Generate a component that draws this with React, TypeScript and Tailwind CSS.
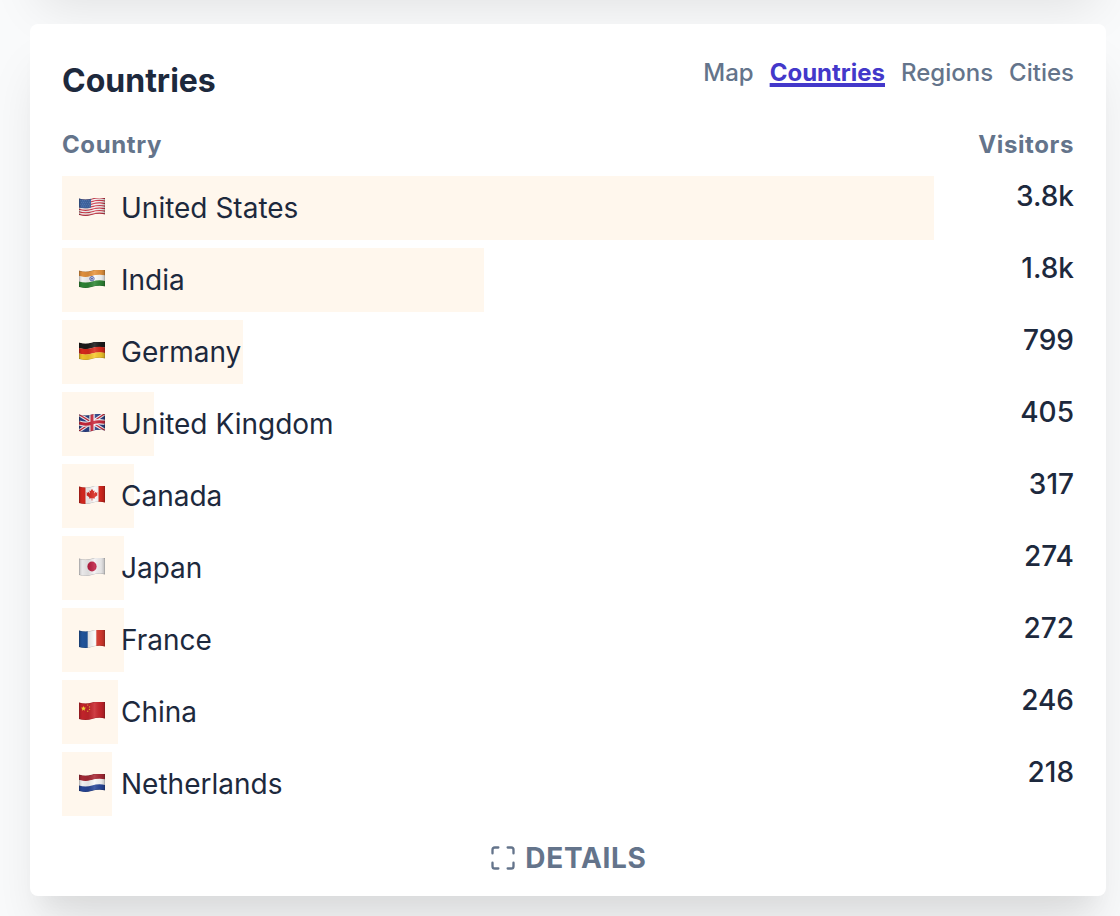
import { useId, useState } from 'react';
import type { ReactNode } from 'react';
import { Maximize } from 'lucide-react';

type Code = 'us' | 'in' | 'de' | 'gb' | 'ca' | 'jp' | 'fr' | 'cn' | 'nl';

interface Row {
  code: Code;
  name: string;
  visitors: string;
  share: number;
}

const rows: Row[] = [
  { code: 'us', name: 'United States', visitors: '3.8k', share: 100 },
  { code: 'in', name: 'India', visitors: '1.8k', share: 48.4 },
  { code: 'de', name: 'Germany', visitors: '799', share: 20.8 },
  { code: 'gb', name: 'United Kingdom', visitors: '405', share: 10.6 },
  { code: 'ca', name: 'Canada', visitors: '317', share: 8.3 },
  { code: 'jp', name: 'Japan', visitors: '274', share: 7.1 },
  { code: 'fr', name: 'France', visitors: '272', share: 7.1 },
  { code: 'cn', name: 'China', visitors: '246', share: 6.4 },
  { code: 'nl', name: 'Netherlands', visitors: '218', share: 5.7 },
];

const tabs = ['Map', 'Countries', 'Regions', 'Cities'];

// a horizontal band that follows the wave of the flag
const band = (y: number, h: number) =>
  `M0 ${y}c4 1.4 9 1.4 13 0s9-1.6 13-.6v${h}c-4-1-9-.8-13 .6s-9 1.4-13 0z`;

const stripes = (colors: string[], top = 2, height = 16.5) =>
  colors.map((color, i) => (
    <path key={i} d={band(top + (i * height) / colors.length, height / colors.length + 0.1)} fill={color} />
  ));

const art: Record<Code, ReactNode> = {
  us: (
    <>
      {stripes(Array.from({ length: 13 }, (_, i) => (i % 2 ? '#f7f5f5' : '#d0394a')))}
      <path d="M0 1h12v9.9c-4 1.2-8 1.3-12 .2z" fill="#3f68a8" />
      <path
        d="M1 4.2h10M2 6h9M1 7.8h10M2 9.6h9"
        stroke="#89a3cf"
        strokeWidth=".6"
        strokeDasharray=".6 1.4"
      />
    </>
  ),
  in: (
    <>
      {stripes(['#e8953f', '#fafafa', '#2f8736'])}
      <circle cx="13" cy="10.2" r="2.2" fill="#cfd5ee" stroke="#4656a8" strokeWidth=".9" />
      <circle cx="13" cy="10.2" r=".9" fill="#3c4d9c" />
    </>
  ),
  de: <>{stripes(['#1c1a1a', '#dc2a1c', '#f7c92b'])}</>,
  gb: (
    <>
      <path d="M0 0h26v20H0z" fill="#2c4288" />
      <path d="M0 2l26 16M0 18.5L26 1" stroke="#f4f2f5" strokeWidth="3.4" />
      <path d="M0 2l26 16M0 18.5L26 1" stroke="#c9283c" strokeWidth="1.2" />
      <path d="M13 0v20M0 10.5c4 1.4 9 1.4 13 0s9-1.6 13-.6" stroke="#f4f2f5" strokeWidth="5.4" fill="none" />
      <path d="M13 0v20M0 10.5c4 1.4 9 1.4 13 0s9-1.6 13-.6" stroke="#cc283c" strokeWidth="3" fill="none" />
    </>
  ),
  ca: (
    <>
      <path d="M0 0h26v20H0z" fill="#faf9f9" />
      <path d="M0 0h6.5v20H0zM19.500 0H26v20h-6.5z" fill="#d9281f" />
      <path
        d="M13 4.200l1.300 2.300 1.300-.6-.5 3 1.700-1.600.4 1 1.500-.2-.7 1.700.8.6-3.100 2.400.3 1.200-2.700-.3.100 2.200h-.8l.1-2.200-2.700.3.300-1.200-3.100-2.400.8-.6-.7-1.700 1.500.2.400-1 1.700 1.600-.5-3 1.300.6z"
        fill="#d9281f"
      />
    </>
  ),
  jp: (
    <>
      <path d="M0 0h26v20H0z" fill="#f3f2f3" />
      <ellipse cx="13" cy="10" rx="4.6" ry="5" fill="#bd1f43" />
    </>
  ),
  fr: (
    <>
      <path d="M0 0h9v20H0z" fill="#2257a0" />
      <path d="M8.7 0h8.7v20H8.700z" fill="#fafafa" />
      <path d="M17.3 0H26v20h-8.700z" fill="#d8392f" />
    </>
  ),
  cn: (
    <>
      <path d="M0 0h26v20H0z" fill="#c9252c" />
      <path d="M4.5 5.4l.7 1.700 1.800.1-1.400 1.200.5 1.800-1.600-1-1.600 1 .5-1.800L2 7.200l1.800-.1z" fill="#fbdc3a" />
      <g fill="#f0b335">
        <circle cx="8.7" cy="4.6" r=".7" />
        <circle cx="10.5" cy="6.4" r=".7" />
        <circle cx="10.5" cy="8.9" r=".7" />
        <circle cx="8.7" cy="10.8" r=".7" />
      </g>
    </>
  ),
  nl: <>{stripes(['#a82a36', '#fafafa', '#28479a'])}</>,
};

function Flag({ code }: { code: Code }) {
  const id = useId();

  return (
    <svg className="h-5 w-[26px] shrink-0" viewBox="0 1.5 26 20" aria-hidden="true">
      <defs>
        <clipPath id={`${id}-wave`}>
          <path d={band(2, 16.5)} />
        </clipPath>
        <linearGradient id={`${id}-shade`}>
          <stop offset="0" stopColor="#000" stopOpacity=".22" />
          <stop offset=".12" stopColor="#000" stopOpacity=".04" />
          <stop offset=".35" stopColor="#000" stopOpacity=".1" />
          <stop offset=".6" stopColor="#fff" stopOpacity=".12" />
          <stop offset=".85" stopColor="#000" stopOpacity=".06" />
          <stop offset="1" stopColor="#000" stopOpacity=".24" />
        </linearGradient>
      </defs>
      <g clipPath={`url(#${id}-wave)`}>
        {art[code]}
        <path d="M0 0h26v20H0z" fill={`url(#${id}-shade)`} />
        <path d={band(2, 16.5)} fill="none" stroke="#000" strokeOpacity=".2" />
      </g>
    </svg>
  );
}

export default function App() {
  const [active, setActive] = useState('Countries');

  return (
    <div className="min-h-screen overflow-hidden bg-gray-50 pr-[14px] pb-5 pl-[30px] font-['Inter',sans-serif] text-slate-800">
      {/* end of the panel above, scrolled out of view */}
      <div className="-mt-48 mb-12 h-42 rounded-lg bg-white shadow-[0_40px_50px_-10px_rgba(0,0,0,0.1),0_20px_20px_-10px_rgba(0,0,0,0.04)]" />

      <section className="rounded-lg bg-white px-8 pt-8 pb-[18px] shadow-[0_40px_50px_-10px_rgba(0,0,0,0.1),0_20px_20px_-10px_rgba(0,0,0,0.04)]">
        <header className="mb-[22px] flex items-start justify-between">
          <h3 className="text-[32px] leading-[50px] font-bold">Countries</h3>
          <nav className="flex gap-4 text-2xl leading-[34px] font-medium text-[#64748b]">
            {tabs.map((tab) => (
              <button
                key={tab}
                type="button"
                onClick={() => setActive(tab)}
                className={
                  tab === active
                    ? 'font-bold text-[#4338ca] underline decoration-4 underline-offset-2'
                    : 'cursor-pointer'
                }
              >
                {tab}
              </button>
            ))}
          </nav>
        </header>

        <table className="w-full table-fixed">
          <thead>
            <tr className="text-2xl leading-[34px] tracking-wide text-[#64748b]">
              <th className="pb-[14px] text-left font-bold">Country</th>
              <th className="w-[140px] pb-[14px] text-right font-bold">Visitors</th>
            </tr>
          </thead>
          <tbody className="text-[28px] leading-10">
            {rows.map((row) => (
              <tr key={row.code}>
                <td className="pb-2">
                  <div className="h-16 bg-orange-50" style={{ width: `${row.share}%` }}>
                    <div className="flex h-16 w-max items-center gap-4 pl-[17px]">
                      <Flag code={row.code} />
                      <span>{row.name}</span>
                    </div>
                  </div>
                </td>
                <td className="text-right align-top font-medium">{row.visitors}</td>
              </tr>
            ))}
          </tbody>
        </table>

        <div className="mt-[14px] flex justify-center">
          <a href="#details" className="flex items-center gap-2 text-[28px] leading-10 font-bold tracking-wide text-[#64748b]">
            <Maximize className="size-7" strokeWidth={2} />
            DETAILS
          </a>
        </div>
      </section>
    </div>
  );
}
